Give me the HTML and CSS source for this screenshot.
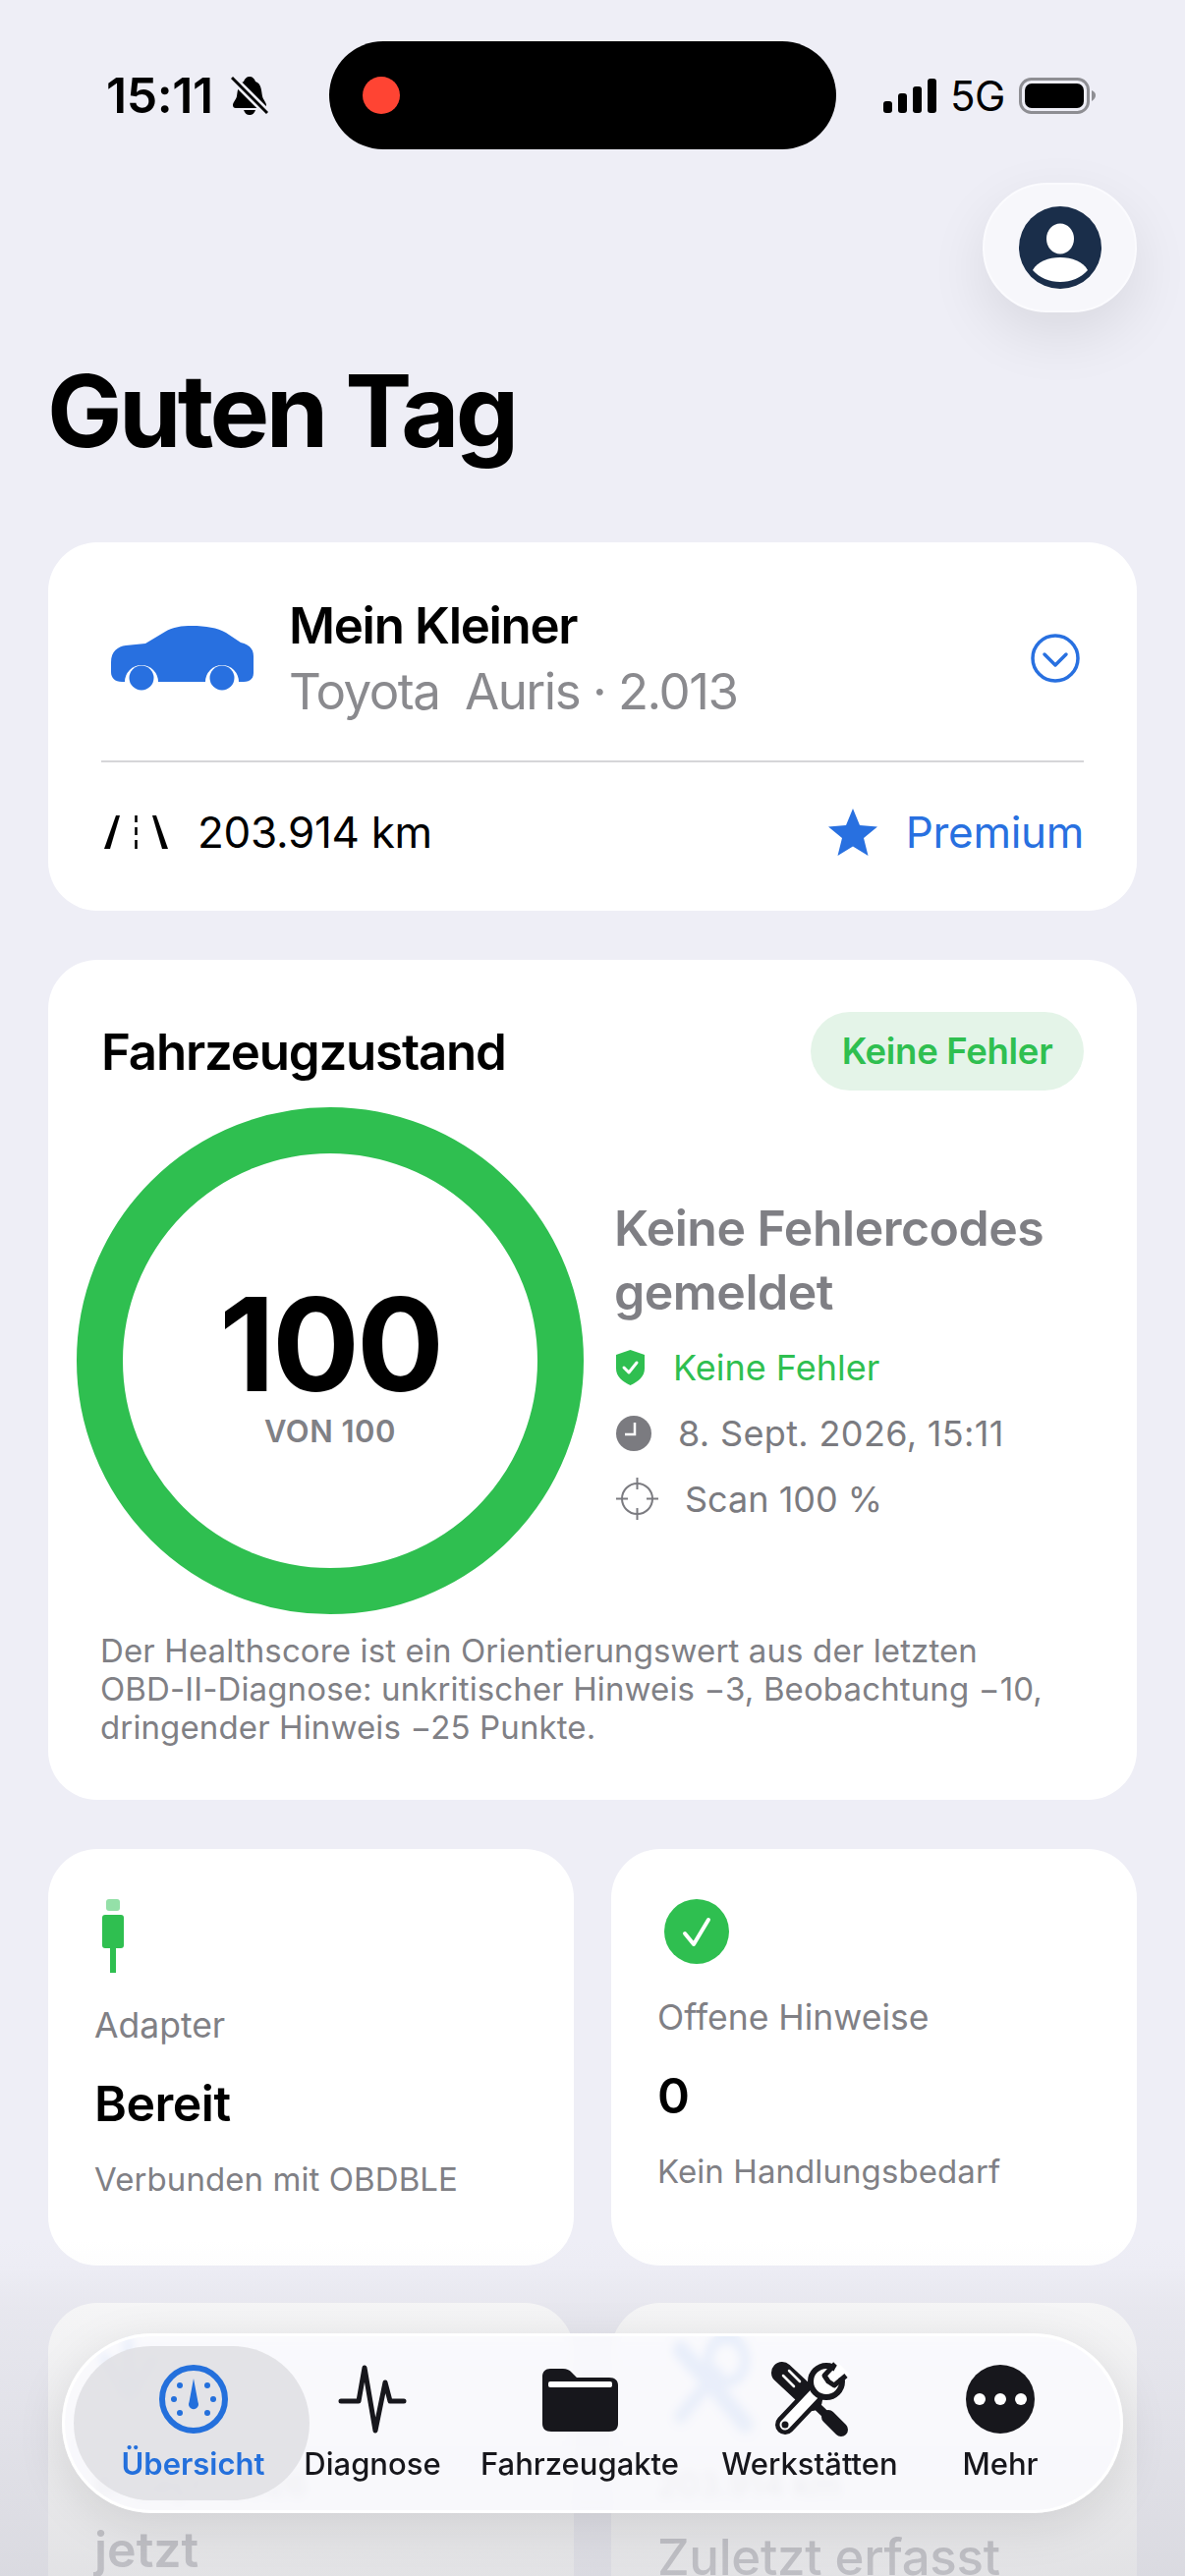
FILE: index.html
```html
<!DOCTYPE html>
<html lang="de">
<head>
  <meta charset="UTF-8" />
  <title>Guten Tag</title>
  <link rel="stylesheet" href="styles.css">
</head>
<body>
<div class="screen">

  <!-- Statusleiste -->
  <div class="status">
    <div class="status-left">
      <span class="time">15:11</span>
      <svg class="bell" viewBox="0 0 38 40">
        <path d="M19 1c3 0 5 2 6 5 6 2 6 9 7 15 1 4 4 6 4 9 0 2-1 3-3 3H5c-2 0-3-1-3-3 0-3 3-5 4-9 1-6 1-13 7-15 1-3 3-5 6-5z" fill="#000"/>
        <path d="M13 35h12c-1 3-3 5-6 5s-5-2-6-5z" fill="#000"/>
        <path d="M1 2l36 36" stroke="#eeeef6" stroke-width="8"/>
        <path d="M1 2l36 36" stroke="#000" stroke-width="3"/>
      </svg>
    </div>
    <div class="island"><span class="rec-dot"></span></div>
    <div class="status-right">
      <svg class="signal" viewBox="0 0 55 36">
        <rect x="0" y="24" width="9" height="12" rx="3"/>
        <rect x="15" y="16" width="9" height="20" rx="3"/>
        <rect x="30" y="9" width="9" height="27" rx="3"/>
        <rect x="45" y="1" width="9" height="35" rx="3"/>
      </svg>
      <span class="net">5G</span>
      <svg class="battery" viewBox="0 0 78 37">
        <rect x="1.5" y="1.5" width="69" height="34" rx="11" fill="none" stroke="#8e8e93" stroke-width="3"/>
        <rect x="6" y="6" width="60" height="25" rx="7" fill="#000"/>
        <path d="M74 13c3 1 4 3 4 5s-1 4-4 6z" fill="#8e8e93"/>
      </svg>
    </div>
  </div>

  <div class="content">
    <div class="profile-btn">
      <svg viewBox="0 0 84 84" width="84" height="84">
        <circle cx="42" cy="42" r="42" fill="#1a2e4a"/>
        <ellipse cx="42" cy="33" rx="14" ry="15.5" fill="#fff"/>
        <path d="M14 65c5-9 16-13 28-13s23 4 28 13c-7 8-17 12-28 12s-21-4-28-12z" fill="#fff"/>
      </svg>
    </div>

    <h1 class="greeting">Guten Tag</h1>

    <!-- Fahrzeug -->
    <section class="card vehicle">
      <div class="vehicle-top">
        <svg class="car" viewBox="22 26 146 68">
          <path d="M23 64C23 53 30 48 38 47L58 45 78 33C86 28 95 27 105 27 120 27 131 29 140 34L155 44C163 46 168 50 168 58V75C168 81 164 84 158 84H153A17 17 0 0 0 119 84H71A17 17 0 0 0 37 84H34C27 84 23 80 23 74Z" fill="#2870e0"/>
          <circle cx="54" cy="80" r="12.5" fill="#2870e0"/>
          <circle cx="136" cy="80" r="12.5" fill="#2870e0"/>
        </svg>
        <div class="vehicle-text">
          <div class="vehicle-name">Mein Kleiner</div>
          <div class="vehicle-sub">Toyota&nbsp; Auris · 2.013</div>
        </div>
        <svg class="chevron" viewBox="0 0 50 50">
          <circle cx="25" cy="25" r="23" fill="none" stroke="#2870e0" stroke-width="3.5"/>
          <path d="M14 21l11 11 11-11" fill="none" stroke="#2870e0" stroke-width="3.5" stroke-linecap="round" stroke-linejoin="round"/>
        </svg>
      </div>
      <div class="vehicle-bottom">
        <svg class="road" viewBox="0 0 65 34">
          <path d="M12 0h4L6 34H0z" fill="#000"/>
          <path d="M49 0h4l12 34h-6z" fill="#000"/>
          <path d="M32.5 0v7M32.5 12v8M32.5 25v9" stroke="#000" stroke-width="2.6"/>
        </svg>
        <span class="km">203.914 km</span>
        <svg class="star" viewBox="0 0 50 48">
          <path d="M25 0l7 17 18 1.500-14 11.500 4.500 18L25 38.500 9.500 48 14 30 0 18.500 18 17z" fill="#2870e0"/>
        </svg>
        <span class="premium">Premium</span>
      </div>
    </section>

    <!-- Fahrzeugzustand -->
    <section class="card health">
      <div class="health-head">
        <h2>Fahrzeugzustand</h2>
        <span class="badge">Keine Fehler</span>
      </div>
      <div class="health-body">
        <div class="ring">
          <svg viewBox="0 0 516 516" width="516" height="516">
            <circle cx="258" cy="258" r="234.500" fill="none" stroke="#2fbf50" stroke-width="47"/>
          </svg>
          <div class="ring-label">
            <div class="score">100</div>
            <div class="score-of">VON 100</div>
          </div>
        </div>
        <div class="health-info">
          <div class="health-title">Keine Fehlercodes gemeldet</div>
          <div class="info-row ok">
            <svg width="29" height="36" viewBox="0 0 29 36">
              <path d="M14.500 0l14.500 5v14c0 8-6 13-14.500 17C6 32 0 27 0 19V5z" fill="#2fbf50"/>
              <path d="M8 18l5 5 8-10" fill="none" stroke="#fff" stroke-width="3" stroke-linecap="round" stroke-linejoin="round"/>
            </svg>
            <span class="row-text row-ok">Keine Fehler</span>
          </div>
          <div class="info-row">
            <svg width="36" height="36" viewBox="0 0 36 36">
              <circle cx="18" cy="18" r="18" fill="#7b7b80"/>
              <path d="M19 7v12H9" fill="none" stroke="#fff" stroke-width="2.500"/>
            </svg>
            <span class="row-text row-date">8. Sept. 2026, 15:11</span>
          </div>
          <div class="info-row">
            <svg width="43" height="43" viewBox="0 0 43 43">
              <circle cx="21.500" cy="21.500" r="15.500" fill="none" stroke="#7b7b80" stroke-width="2"/>
              <path d="M21.500 0v12M21.500 31v12M0 21.500h12M31 21.500h12" stroke="#7b7b80" stroke-width="2"/>
            </svg>
            <span class="row-text row-scan">Scan 100 %</span>
          </div>
        </div>
      </div>
      <p class="health-note">Der Healthscore ist ein Orientierungswert aus der letzten<br>OBD-II-Diagnose: unkritischer Hinweis −3, Beobachtung −10,<br>dringender Hinweis −25 Punkte.</p>
    </section>

    <!-- Kacheln -->
    <div class="tiles">
      <section class="card tile">
        <svg class="tile-icon plug" width="24" height="75" viewBox="0 0 24 75">
          <rect x="5" y="0" width="14" height="12" rx="3" fill="#94e0a8"/>
          <rect x="1" y="16" width="22" height="34" rx="3" fill="#2fbf50"/>
          <rect x="9" y="50" width="6" height="25" fill="#2fbf50"/>
        </svg>
        <div class="tile-label">Adapter</div>
        <div class="tile-value">Bereit</div>
        <div class="tile-sub">Verbunden mit OBDBLE</div>
      </section>
      <section class="card tile">
        <svg class="tile-icon check" width="66" height="66" viewBox="0 0 66 66">
          <circle cx="33" cy="33" r="33" fill="#2fbf50"/>
          <path d="M21 35l9 11 15-25" fill="none" stroke="#fff" stroke-width="4" stroke-linecap="round" stroke-linejoin="round"/>
        </svg>
        <div class="tile-label">Offene Hinweise</div>
        <div class="tile-value">0</div>
        <div class="tile-sub">Kein Handlungsbedarf</div>
      </section>
      <section class="card tile tile-low">
        <svg class="low-icon" width="62" height="90" viewBox="0 0 62 90">
          <path d="M6 20l22 40M30 4l2 56M56 22L34 60" stroke="#2870e0" stroke-width="9" fill="none" stroke-linecap="round"/>
        </svg>
        <div class="low-date">8. Sept. 2026</div>
        <div class="low-main">jetzt</div>
      </section>
      <section class="card tile tile-low">
        <svg class="low-icon low-tools" width="90" height="104" viewBox="0 0 82 80" preserveAspectRatio="none">
          <path d="M15 13l32 30M47 43l28 28" stroke="#2870e0" stroke-width="14" stroke-linecap="round"/>
          <circle cx="58" cy="21" r="17" fill="none" stroke="#2870e0" stroke-width="9"/>
          <path d="M15 65l34-34" stroke="#2870e0" stroke-width="11" stroke-linecap="round"/>
        </svg>
        <div class="low-date">203.914 km</div>
        <div class="low-main low-main-reg">Zuletzt erfasst</div>
      </section>
    </div>
  </div>

  <div class="fade"></div>

  <!-- Tableiste -->
  <nav class="tabbar">
    <div class="tab tab-active">
      <svg class="tab-icon" width="70" height="70" viewBox="0 0 70 70">
        <circle cx="35" cy="35" r="32" fill="none" stroke="#2470dc" stroke-width="6"/>
        <path d="M35 14l4.500 24a5 5 0 1 1-9 0z" fill="#2470dc"/>
        <g fill="#2470dc">
          <circle cx="21" cy="21" r="3"/><circle cx="49" cy="21" r="3"/>
          <circle cx="15" cy="35" r="3"/><circle cx="55" cy="35" r="3"/>
          <circle cx="21" cy="49" r="3"/><circle cx="49" cy="49" r="3"/>
        </g>
      </svg>
      <span class="tab-label">Übersicht</span>
    </div>
    <div class="tab">
      <svg class="tab-icon" width="70" height="70" viewBox="0 0 70 70">
        <path d="M3 37h18l6-34 11 64 10-49 5 19h14" fill="none" stroke="#17171c" stroke-width="5" stroke-linecap="round" stroke-linejoin="round"/>
      </svg>
      <span class="tab-label">Diagnose</span>
    </div>
    <div class="tab">
      <svg class="tab-icon" width="77" height="70" viewBox="0 0 77 70">
        <path d="M0 12c0-5 3-8 8-8h13c4 0 6 1 9 4l5 5h33c6 0 9 3 9 8v39c0 5-3 8-9 8H9c-6 0-9-3-9-8z" fill="#17171c"/>
        <rect x="6" y="17" width="65" height="6" rx="2" fill="#fff"/>
      </svg>
      <span class="tab-label">Fahrzeugakte</span>
    </div>
    <div class="tab">
      <svg class="tab-icon tab-icon-tools" width="82" height="80" viewBox="0 0 82 80">
        <path d="M13 12l30 28" stroke="#17171c" stroke-width="22" stroke-linecap="round"/>
        <path d="M44 42l20 19" stroke="#17171c" stroke-width="8"/>
        <path d="M60 57l13 13" stroke="#17171c" stroke-width="14" stroke-linecap="round"/>
        <path d="M14 15l11 11M20 10l11 11" stroke="#fff" stroke-width="2.500" stroke-linecap="round"/>
        <path d="M16 65l36-38" stroke="#17171c" stroke-width="20" stroke-linecap="round"/>
        <path d="M16 65l36-38" stroke="#fff" stroke-width="11" stroke-linecap="round"/>
        <circle cx="16" cy="65" r="3.500" fill="#17171c"/>
        <circle cx="58" cy="21" r="16" fill="#fff" stroke="#17171c" stroke-width="6"/>
        <path d="M60 21L70 2 82 14z" fill="#fff"/>
        <path d="M67 3L56 15l4 6 6 4 12-10" fill="none" stroke="#17171c" stroke-width="5" stroke-linejoin="round"/>
      </svg>
      <span class="tab-label">Werkstätten</span>
    </div>
    <div class="tab">
      <svg class="tab-icon" width="70" height="70" viewBox="0 0 70 70">
        <circle cx="35" cy="35" r="35" fill="#17171c"/>
        <circle cx="14" cy="35" r="6" fill="#fff"/><circle cx="35" cy="35" r="6" fill="#fff"/><circle cx="56" cy="35" r="6" fill="#fff"/>
      </svg>
      <span class="tab-label">Mehr</span>
    </div>
  </nav>
</div>
</body>
</html>
```

FILE: styles.css
```css
* {
  box-sizing: border-box;
}

body {
  margin: 0;
  background: #eeeef6;
  font-family: Inter, "Liberation Sans", sans-serif;
  color: #000;
}

.screen {
  position: relative;
  width: 1206px;
  height: 2622px;
  overflow: hidden;
  background: #eeeef6;
}

/* Statusleiste */
.status {
  display: flex;
  align-items: center;
  height: 152px;
  padding: 42px 0 0 108px;
}

.status-left {
  display: flex;
  align-items: center;
  width: 227px;
  gap: 18px;
}

.time {
  font-size: 50px;
  font-weight: 600;
  letter-spacing: -0.4px;
  line-height: 110px;
}

.bell {
  width: 38px;
  height: 40px;
}

.island {
  display: flex;
  align-items: center;
  width: 516px;
  height: 110px;
  padding-left: 34px;
  background: #000;
  border-radius: 55px;
}

.rec-dot {
  width: 38px;
  height: 38px;
  border-radius: 50%;
  background: #ff4433;
}

.status-right {
  display: flex;
  align-items: center;
  margin-left: 48px;
}

.signal {
  width: 55px;
  height: 36px;
}

.net {
  margin-left: 13px;
  font-size: 42px;
  font-weight: 400;
  letter-spacing: -0.5px;
}

.battery {
  width: 78px;
  height: 37px;
  margin-left: 14px;
}

/* Inhalt */
.content {
  padding: 34px 49px 0;
}

.profile-btn {
  display: flex;
  align-items: center;
  justify-content: center;
  width: 157px;
  height: 132px;
  margin-left: auto;
  background: #f7f7fb;
  border: 2px solid #fbfbfe;
  border-radius: 66px;
  box-shadow: 0 22px 60px rgba(0,0,0,0.09);
}

.greeting {
  margin: 40px 0 74px -1px;
  font-size: 102px;
  font-weight: 700;
  line-height: 120px;
  letter-spacing: -3.6px;
}

.card {
  background: #fff;
  border-radius: 50px;
}

/* Fahrzeug */
.vehicle {
  height: 375px;
  padding: 0 54px;
}

.vehicle-top {
  display: flex;
  align-items: center;
  height: 224px;
  padding-top: 14px;
  border-bottom: 2px solid #d6d6d9;
}

.car {
  width: 146px;
  height: 68px;
  margin-left: 9px;
}

.vehicle-text {
  flex: 1;
  margin-left: 36px;
}

.vehicle-name {
  font-size: 51px;
  font-weight: 600;
  line-height: 62px;
  letter-spacing: -1.3px;
}

.vehicle-sub {
  margin-top: 5px;
  font-size: 51px;
  line-height: 62px;
  color: #8a8a8e;
  letter-spacing: -1.5px;
}

.chevron {
  width: 50px;
  height: 50px;
  margin-right: 4px;
}

.vehicle-bottom {
  display: flex;
  align-items: center;
  height: 141px;
}

.road {
  width: 65px;
  height: 34px;
  margin-left: 3px;
}

.km {
  flex: 1;
  margin-left: 30px;
  font-size: 44px;
  letter-spacing: -0.3px;
}

.star {
  width: 50px;
  height: 48px;
}

.premium {
  margin-left: 29px;
  font-size: 44px;
  color: #2870e0;
  letter-spacing: -0.3px;
}

/* Fahrzeugzustand */
.health {
  height: 855px;
  margin-top: 50px;
  padding: 53px 54px;
}

.health-head {
  display: flex;
  align-items: center;
  justify-content: space-between;
  height: 80px;
}

.health-head h2 {
  margin: 0;
  font-size: 51px;
  font-weight: 600;
  letter-spacing: -1.2px;
}

.badge {
  display: flex;
  align-items: center;
  justify-content: center;
  width: 278px;
  height: 80px;
  border-radius: 40px;
  background: #e4f4e8;
  color: #2fbf50;
  font-size: 36.5px;
  font-weight: 600;
  letter-spacing: -0.3px;
}

.health-body {
  display: flex;
  margin: 17px 0 0 -25px;
}

.ring {
  position: relative;
  width: 516px;
  height: 516px;
  flex: none;
}

.ring-label {
  position: absolute;
  inset: 0;
  display: flex;
  flex-direction: column;
  align-items: center;
  justify-content: center;
  padding-top: 18px;
}

.score {
  font-size: 132px;
  font-weight: 700;
  line-height: 110px;
  letter-spacing: -3px;
}

.score-of {
  margin-top: 16px;
  font-size: 31px;
  font-weight: 600;
  line-height: 36px;
  color: #808085;
  letter-spacing: 0.5px;
}

.health-info {
  margin-left: 31px;
  padding-top: 91px;
}

.health-title {
  width: 470px;
  font-size: 50px;
  font-weight: 600;
  line-height: 65px;
  color: #7f7f84;
  letter-spacing: -0.5px;
}

.info-row {
  display: flex;
  align-items: center;
  height: 67px;
  margin-left: 2px;
}

.ok {
  margin-top: 10px;
}

.row-text {
  font-size: 36px;
  color: #7b7b80;
}

.row-ok {
  margin-left: 29px;
  color: #2fbf50;
}

.row-date {
  margin-left: 27px;
  letter-spacing: 0.35px;
}

.row-scan {
  margin-left: 27px;
}

.health-note {
  margin: 18px 0 0 -1px;
  font-size: 33px;
  line-height: 39px;
  color: #808085;
  letter-spacing: 0.12px;
  white-space: nowrap;
}

/* Kacheln */
.tiles {
  display: grid;
  grid-template-columns: 535px 535px;
  column-gap: 38px;
  row-gap: 38px;
  margin-top: 50px;
}

.tile {
  height: 424px;
  padding: 51px 47px 0;
}

.tile-icon {
  display: block;
}

.plug {
  margin-left: 7px;
  margin-bottom: 32px;
}

.check {
  margin-left: 7px;
  margin-bottom: 33px;
}

.tile-label {
  font-size: 35.5px;
  line-height: 44px;
  color: #808085;
}

.tile-value {
  margin-top: 27px;
  font-size: 50px;
  font-weight: 600;
  line-height: 60px;
  letter-spacing: -0.5px;
}

.tile-sub {
  margin-top: 25px;
  font-size: 33px;
  line-height: 44px;
  color: #808085;
  letter-spacing: 0.08px;
}

.tile-low {
  padding-top: 35px;
}

.low-icon {
  display: block;
  margin-left: 4px;
  opacity: 0.75;
}

.low-tools {
  margin-top: -4px;
  margin-left: 7px;
}

.low-date {
  margin-top: 38px;
  font-size: 34px;
  line-height: 44px;
  color: #808085;
}

.low-tools + .low-date {
  margin-top: 28px;
}

.low-main {
  margin-top: 14px;
  font-size: 50px;
  font-weight: 600;
  line-height: 60px;
  color: #b4b4ba;
}

.low-main-reg {
  margin-top: 22px;
  font-size: 51px;
  font-weight: 500;
  letter-spacing: -0.3px;
}

/* Verblassen hinter der Tableiste */
.fade {
  position: absolute;
  left: 0;
  right: 0;
  bottom: 0;
  height: 342px;
  background: linear-gradient(rgba(205,205,210,0), rgba(205,205,210,0.04) 8%, rgba(205,205,210,0.2) 20%, rgba(200,200,205,0.52) 100%);
  pointer-events: none;
}

/* Tableiste */
.tabbar {
  position: absolute;
  left: 63px;
  top: 2375px;
  display: grid;
  grid-template-columns: 240px 128px 294px 174px 214px;
  width: 1080px;
  height: 183px;
  padding: 10px 9px;
  background: rgba(250,250,254,0.86);
  border: 3px solid #fff;
  border-radius: 92px;
  box-shadow: 0 12px 50px rgba(0,0,0,0.1);
  backdrop-filter: blur(5px);
}

.tab {
  display: flex;
  flex-direction: column;
  align-items: center;
  white-space: nowrap;
  padding-top: 19px;
}

.tab-active {
  padding-left: 3px;
  background: rgba(224,224,228,0.88);
  border-radius: 80px;
}

.tab-icon {
  display: block;
}

.tab-icon-tools {
  margin: -4px 0 -6px;
}

.tab-label {
  margin-top: 11px;
  font-size: 31px;
  font-weight: 500;
  line-height: 40px;
  color: #17171c;
}

.tab-active .tab-label {
  color: #2470dc;
  font-weight: 600;
}
```
